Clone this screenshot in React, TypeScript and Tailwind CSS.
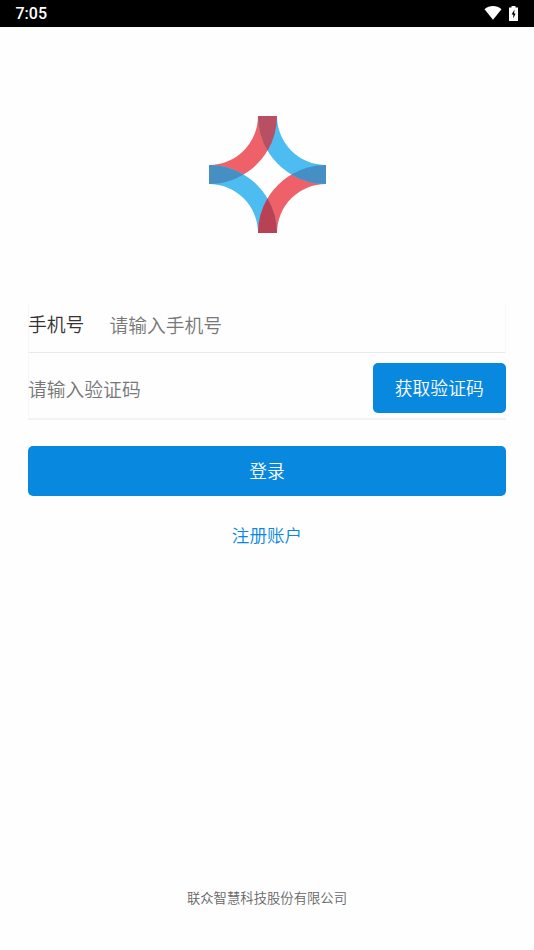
function Logo() {
  return (
    <svg width="117" height="117" viewBox="0 0 117 117" aria-hidden="true">
      <path fill="#ef6169" d="M49 0H68A68 68 0 0 1 0 68V49A49 49 0 0 0 49 0Z" />
      <path fill="#ef6169" d="M68 117H49A68 68 0 0 1 117 49V68A49 49 0 0 0 68 117Z" />
      <path fill="#4dbcf0" d="M68 0H49A68 68 0 0 0 117 68V49A49 49 0 0 1 68 0Z" />
      <path fill="#4dbcf0" d="M49 117H68A68 68 0 0 0 0 49V68A49 49 0 0 1 49 117Z" />
      <path fill="#b84f62" d="M49 0H68A68 68 0 0 1 58.5 34.7A68 68 0 0 1 49 0Z" />
      <path fill="#b84254" d="M49 117H68A68 68 0 0 0 58.5 82.3A68 68 0 0 0 49 117Z" />
      <path fill="#468fc4" d="M0 49V68A68 68 0 0 0 34.7 58.5A68 68 0 0 0 0 49Z" />
      <path fill="#468fc4" d="M117 49V68A68 68 0 0 1 82.3 58.5A68 68 0 0 1 117 49Z" />
    </svg>
  );
}

function StatusBar() {
  return (
    <header className="flex h-[26.5px] shrink-0 items-center bg-black pr-4 pl-[15.5px] text-white">
      <span className="pt-[2px] font-[Roboto,sans-serif] text-[16px] leading-5 font-medium">7:05</span>
      <svg className="ml-auto" width="18" height="14" viewBox="0 0 18 14" aria-hidden="true">
        <path fill="#fff" d="M0.5 3.3C5.4-1 12.6-1 17.5 3.3L9 13.7Z" />
      </svg>
      <svg className="ml-[7px]" width="9" height="15" viewBox="0 0 9 15" aria-hidden="true">
        <path fill="#fff" d="M2.5 0H6.5V1.5H9V15H0V1.5H2.5Z" />
        <path fill="#000" d="M5.5 3.5L2.6 8.6H4.3V12.4L6.6 7.4H5.1Z" />
      </svg>
    </header>
  );
}

export default function App() {
  return (
    <div className="flex h-[950px] w-[534px] flex-col overflow-hidden bg-[#fefefe] font-['Noto_Sans_CJK_SC',sans-serif] font-[350]">
      <StatusBar />
      <main className="flex flex-1 flex-col px-7">
        <div className="mt-[89px] flex justify-center">
          <Logo />
        </div>
        <form className="mt-[71.5px] flex flex-col text-[18.8px]" onSubmit={(e) => e.preventDefault()}>
          <label className="flex h-[49px] items-center border-x border-b border-x-[#f8f8f8] border-b-[#e9e9e9]">
            <span className="-ml-px w-[81.4px] shrink-0 pb-[7px] text-[#333]">手机号</span>
            <input className="min-w-0 flex-1 pb-[6px] outline-none placeholder:text-[#777]" placeholder="请输入手机号" />
          </label>
          <div className="flex h-[67px] items-center border-b-2 border-l border-b-[#f3f3f3] border-l-[#f8f8f8]">
            <input className="-ml-px min-w-0 flex-1 pt-[8px] outline-none placeholder:text-[#777]" placeholder="请输入验证码" />
            <button type="button" className="mt-[5px] h-[50px] w-[133.5px] rounded-[5px] bg-[#0988df] pb-[2px] text-[17.8px] text-white">
              获取验证码
            </button>
          </div>
          <button type="submit" className="mt-[26.4px] h-[50px] rounded-[5px] bg-[#0988df] pb-[2px] text-[17.8px] text-white">
            登录
          </button>
        </form>
        <a className="mt-[25.5px] self-center text-[17.6px] leading-[26px] text-[#0988df]">注册账户</a>
        <footer className="mt-auto mb-[42px] text-center text-[13.35px] leading-5 text-[#666]">联众智慧科技股份有限公司</footer>
      </main>
    </div>
  );
}
